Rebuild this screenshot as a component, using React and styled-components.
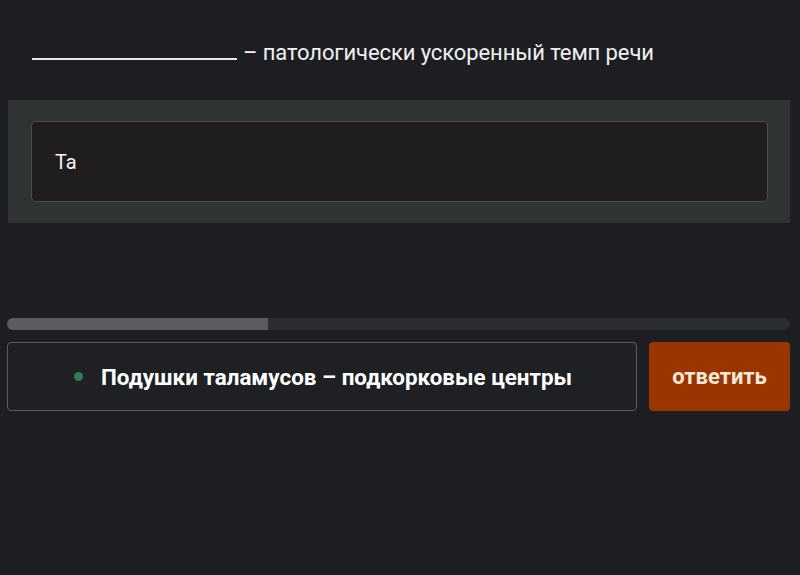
import React, { useState } from 'react'
import styled, { createGlobalStyle } from 'styled-components'

const GlobalStyle = createGlobalStyle`
  html, body {
    margin: 0;
    padding: 0;
    background: #1d1e21;
    font-family: Roboto, "Noto Sans", "Liberation Sans", sans-serif;
  }
  #root {
    min-height: 575px;
  }
`

const Page = styled.div`
  height: 575px;
  box-sizing: border-box;
  padding: 0 10px 0 7px;
  background: #1d1e21;
  display: flex;
  flex-direction: column;
`

const Question = styled.div`
  height: 100px;
  box-sizing: border-box;
  padding: 39px 0 0 25px;
  line-height: 28px;
  color: #f1f1f1;
  font-size: 22px;
  letter-spacing: -0.1px;
`

const Blank = styled.span`
  display: inline-block;
  width: 205px;
  height: 18px;
  border-bottom: 2px solid #e8e8e8;
  margin-right: 6px;
  vertical-align: baseline;
`

const Panel = styled.div`
  margin-left: 1px;
  background: #2f3333;
  padding: 21px 22px 21px 23px;
`

const Input = styled.input`
  display: block;
  width: 100%;
  box-sizing: border-box;
  height: 81px;
  background: #1f1d1d;
  border: 1px solid #4a4d4d;
  border-radius: 5px;
  color: #f4f4f4;
  font-family: Roboto, "Noto Sans", sans-serif;
  font-size: 20px;
  padding: 0 23px;
  outline: none;
`

const Progress = styled.div`
  margin-top: 95px;
  height: 12px;
  border-radius: 6px;
  background: #2c2d30;
  overflow: hidden;
`

const Fill = styled.div`
  height: 100%;
  background: #5b5c5f;
`

const AnswerRow = styled.div`
  margin-top: 12px;
  display: flex;
  gap: 12px;
  height: 69px;
`

const Answer = styled.div`
  flex: 1;
  box-sizing: border-box;
  border: 1px solid #5c5d60;
  border-radius: 4px;
  background: #1f2024;
  display: flex;
  align-items: center;
  padding-left: 66px;
  gap: 18px;
  color: #ffffff;
  font-weight: 700;
  font-size: 22.4px;
`

const Dot = styled.span`
  flex: none;
  width: 9px;
  height: 9px;
  border-radius: 50%;
  background: ${({ color }) => color};
`

const SubmitButton = styled.button`
  width: 141px;
  border: none;
  border-radius: 4px;
  background: #9b3500;
  color: #f6e8d8;
  font-family: Roboto, "Noto Sans", sans-serif;
  font-weight: 700;
  font-size: 22px;
  cursor: pointer;
`

export default function App() {
  const [value, setValue] = useState('Та')
  const progress = 0.333

  return (
    <>
      <GlobalStyle />
      <Page>
        <Question>
          <Blank />– патологически ускоренный темп речи
        </Question>
        <Panel>
          <Input value={value} onChange={e => setValue(e.target.value)} />
        </Panel>
        <Progress>
          <Fill style={{ width: `${progress * 100}%` }} />
        </Progress>
        <AnswerRow>
          <Answer>
            <Dot color="#2f7d50" />
            Подушки таламусов – подкорковые центры
          </Answer>
          <SubmitButton>ответить</SubmitButton>
        </AnswerRow>
      </Page>
    </>
  )
}
